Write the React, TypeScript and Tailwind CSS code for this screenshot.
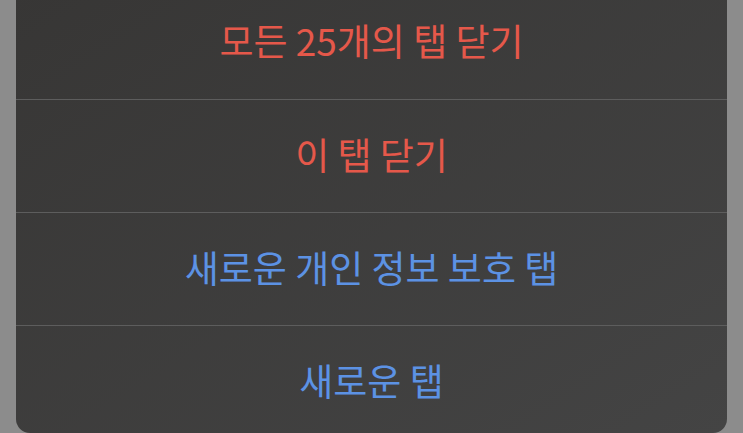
const items = [
  { label: "모든 25개의 탭 닫기", tone: "red" },
  { label: "이 탭 닫기", tone: "red" },
  { label: "새로운 개인 정보 보호 탭", tone: "blue" },
  { label: "새로운 탭", tone: "blue" },
];

export default function App() {
  return (
    <div className="h-[433px] w-[743px] overflow-hidden bg-[#8c8c8c] px-4">
      <div
        className="-mt-[14px] flex h-[447px] flex-col overflow-hidden rounded-[14px] bg-gradient-to-br from-[#373635] to-[#444444]"
        style={{ fontFamily: '"Noto Sans CJK KR", "Noto Sans", sans-serif' }}
      >
        {items.map((item, i) => (
          <div
            key={i}
            className={`flex h-[113px] shrink-0 items-center justify-center pb-[4px] text-[37px] leading-none ${
              i > 0 ? "border-t border-[#5d5d5d]" : ""
            } ${item.tone === "red" ? "text-[#e5584a]" : "text-[#5c92e4]"}`}
          >
            {item.label}
          </div>
        ))}
      </div>
    </div>
  );
}
